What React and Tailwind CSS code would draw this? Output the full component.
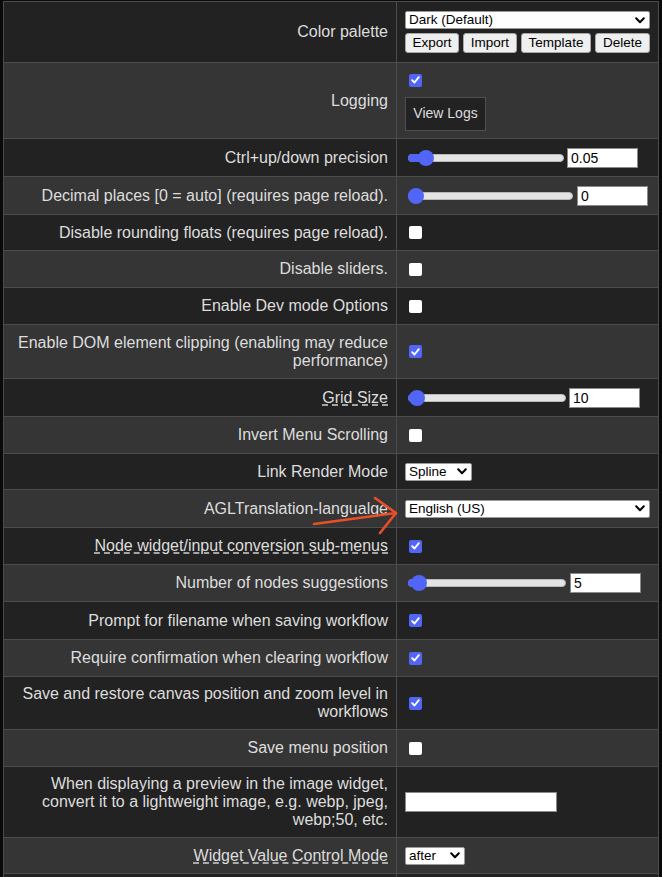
import React from "react";

const FONT = { fontFamily: '"Liberation Sans", Arial, sans-serif' };

const Check = ({ on }) => (
  <span
    className={
      "ml-[4px] flex h-[13px] w-[13px] items-center justify-center rounded-[2px] " +
      (on ? "bg-[#5166f6]" : "bg-white")
    }
  >
    {on && (
      <svg width="9" height="8" viewBox="0 0 9 8">
        <path d="M1.2 4.2 L3.5 6.5 L7.8 1.2" fill="none" stroke="white" strokeWidth="1.9" strokeLinecap="round" strokeLinejoin="round" />
      </svg>
    )}
  </span>
);

const Chevron = () => (
  <svg width="10" height="7" viewBox="0 0 10 7" className="shrink-0">
    <path d="M1.2 1.3 L5 5.2 L8.8 1.3" fill="none" stroke="black" strokeWidth="2" strokeLinecap="round" strokeLinejoin="round" />
  </svg>
);

const Select = ({ value, w }) => (
  <div
    className="flex h-[18px] items-center justify-between rounded-[2px] border border-[#9a9a9a] bg-white pl-[3px] pr-[4px] text-[13.5px] leading-none text-black"
    style={{ width: w }}
  >
    <span>{value}</span>
    <Chevron />
  </div>
);

const TextBox = ({ value, w }) => (
  <div
    className="flex h-[20px] items-center border border-[#8a8a8a] bg-white pl-[3px] text-[14px] leading-none text-black"
    style={{ width: w }}
  >
    {value}
  </div>
);

const Slider = ({ trackW, thumb, inputW, gap, value }) => (
  <div className="flex items-center">
    <div className="relative ml-[3px] flex h-[16px] items-center" style={{ width: trackW }}>
      <div className="h-[8px] w-full rounded-full border border-[#b9b9b9] bg-[#e4e4e4]" />
      <div className="absolute left-0 h-[8px] rounded-l-full bg-[#5166f6]" style={{ width: thumb }} />
      <div className="absolute h-[16px] w-[16px] rounded-full bg-[#5166f6]" style={{ left: thumb - 8 }} />
    </div>
    <div style={{ marginLeft: gap }}>
      <TextBox value={value} w={inputW} />
    </div>
  </div>
);

const Btn = ({ children, w }) => (
  <div
    className="flex h-[20px] items-center justify-center rounded-[3px] border border-[#a8a8a8] bg-[#efefef] text-[13.5px] leading-none text-black"
    style={{ width: w }}
  >
    {children}
  </div>
);

const rows = [
  {
    h: 61,
    label: "Color palette",
    ctrl: (
      <div className="flex flex-col gap-[4px]">
        <Select value="Dark (Default)" w={245} />
        <div className="flex gap-[4px]">
          <Btn w={54}>Export</Btn>
          <Btn w={54}>Import</Btn>
          <Btn w={70}>Template</Btn>
          <Btn w={55}>Delete</Btn>
        </div>
      </div>
    ),
  },
  {
    h: 76,
    label: "Logging",
    ctrl: (
      <div className="flex flex-col">
        <div className="my-[3px]">
          <Check on />
        </div>
        <div className="mt-[7px] flex h-[34px] w-[81px] items-center justify-center border border-[#4f4f4f] bg-[#222] text-[14px] text-[#ddd]">
          View Logs
        </div>
      </div>
    ),
  },
  { h: 38, label: "Ctrl+up/down precision", ctrl: <Slider trackW={156} thumb={18} inputW={71} gap={3} value="0.05" /> },
  { h: 38, label: "Decimal places [0 = auto] (requires page reload).", ctrl: <Slider trackW={165} thumb={8} inputW={71} gap={4} value="0" /> },
  { h: 36, label: "Disable rounding floats (requires page reload).", ctrl: <Check /> },
  { h: 37, label: "Disable sliders.", ctrl: <Check /> },
  { h: 37, label: "Enable Dev mode Options", ctrl: <Check /> },
  { h: 54, label: "Enable DOM element clipping (enabling may reduce performance)", ctrl: <Check on /> },
  { h: 38, label: "Grid Size", dashed: true, ctrl: <Slider trackW={158} thumb={9} inputW={71} gap={3} value="10" /> },
  { h: 37, label: "Invert Menu Scrolling", ctrl: <Check /> },
  { h: 36, label: "Link Render Mode", ctrl: <Select value="Spline" w={67} /> },
  { h: 38, label: "AGLTranslation-langualge", ctrl: <Select value="English (US)" w={245} /> },
  { h: 37, label: "Node widget/input conversion sub-menus", dashed: true, ctrl: <Check on /> },
  { h: 37, label: "Number of nodes suggestions", ctrl: <Slider trackW={158} thumb={11} inputW={71} gap={4} value="5" /> },
  { h: 38, label: "Prompt for filename when saving workflow", ctrl: <Check on /> },
  { h: 37, label: "Require confirmation when clearing workflow", ctrl: <Check on /> },
  { h: 53, label: "Save and restore canvas position and zoom level in workflows", ctrl: <Check on /> },
  { h: 37, label: "Save menu position", ctrl: <Check /> },
  {
    h: 71,
    label: "When displaying a preview in the image widget, convert it to a lightweight image, e.g. webp, jpeg, webp;50, etc.",
    ctrl: <TextBox value="" w={152} />,
  },
  { h: 36, label: "Widget Value Control Mode", dashed: true, ctrl: <Select value="after" w={60} /> },
  { h: 36, label: "", ctrl: null },
];

export default function App() {
  return (
    <div className="relative h-[877px] w-[662px] overflow-hidden bg-[#0a0a0a]" style={FONT}>
      <div className="ml-[3px] mt-[1px] w-[656px] border-l border-r border-t border-[#4c4c4c]">
        {rows.map((r, i) => (
          <div
            key={i}
            className={"flex border-b border-[#4c4c4c] " + (i % 2 ? "bg-[#353535]" : "bg-[#222222]")}
            style={{ height: r.h }}
          >
            <div className="flex w-[393px] shrink-0 items-center justify-end border-r border-[#4c4c4c] pl-2 pr-2 text-right text-[16px] leading-[18px] text-[#dddddd]">
              <span className={r.dashed ? "underline decoration-dashed decoration-[#cfcfcf] underline-offset-2" : ""}>{r.label}</span>
            </div>
            <div className="flex flex-1 items-center pl-2">{r.ctrl}</div>
          </div>
        ))}
      </div>
      {/* red annotation arrow */}
      <svg className="pointer-events-none absolute left-0 top-0" width="662" height="877">
        <g fill="none" stroke="#e84e28" strokeWidth="2.6" strokeLinecap="round" strokeLinejoin="round">
          <path d="M314 524 L396 513" />
          <path d="M375 498 L396 513 L380 533" />
        </g>
      </svg>
    </div>
  );
}
